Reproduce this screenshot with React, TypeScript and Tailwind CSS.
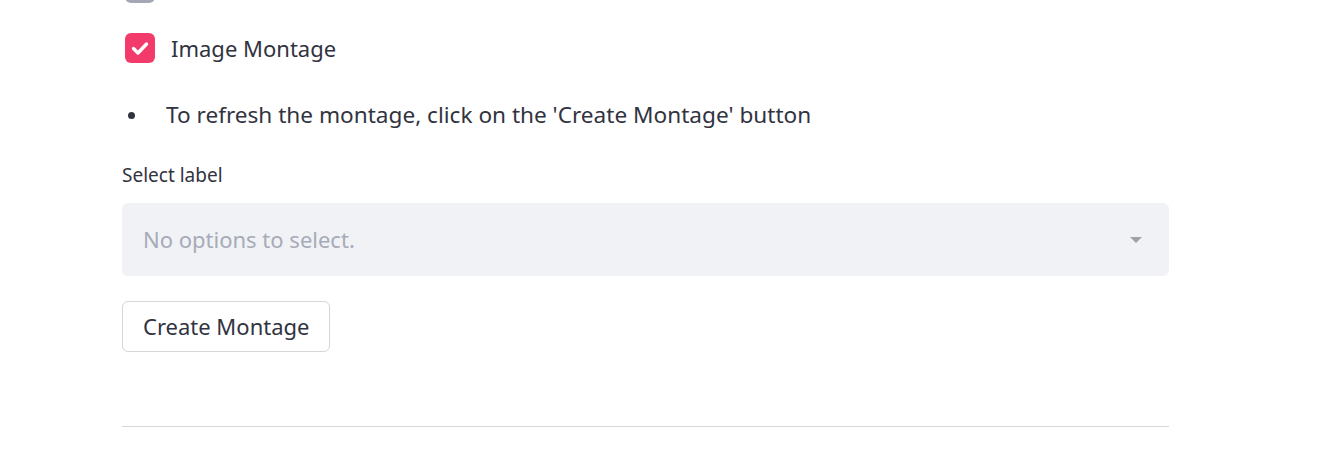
import React from "react";

export default function App() {
  const font = { fontFamily: '"Noto Sans", "Open Sans", sans-serif' };
  return (
    <div className="w-[1321px] h-[472px] bg-white overflow-hidden relative text-[#31333f]" style={font}>
      <div className="absolute left-[122px] top-[-28px] w-[1047px] flex flex-col">
        {/* cut-off checkbox row */}
        <div className="flex items-start h-[32px]">
          <div className="w-[30px] h-[30px] mt-[1px] ml-[3px] rounded-[6px] bg-[#a3a8b4]" />
          <span className="ml-[16px] text-[22px] leading-[24px]">Show the annotations on the key labels by entity</span>
        </div>
        {/* image montage checkbox */}
        <div className="flex items-center h-[32px] mt-[28px]">
          <div className="w-[30px] h-[30px] ml-[3px] rounded-[6px] bg-[#f23b6b] flex items-center justify-center">
            <svg width="20" height="20" viewBox="0 0 20 20" fill="none">
              <path d="M3.5 10.5l4.5 4.5 8.5-9" stroke="white" strokeWidth="3.4" strokeLinecap="round" strokeLinejoin="round" />
            </svg>
          </div>
          <span className="ml-[16px] text-[22px] leading-[32px]">Image Montage</span>
        </div>
        {/* bullet */}
        <div className="mt-[35px] flex items-center h-[32px]">
          <div className="w-[7px] h-[7px] rounded-full bg-[#31333f] ml-[6px]" />
          <span className="ml-[31px] text-[22.6px] leading-[32px]">To refresh the montage, click on the 'Create Montage' button</span>
        </div>
        {/* select */}
        <div className="mt-[32px] text-[19px] leading-[24px]">Select label</div>
        <div className="mt-[16px] h-[73px] rounded-[6px] bg-[#f0f2f6] flex items-center justify-between pl-[21px] pr-[26px]">
          <span className="text-[22px] text-[#a7abb8]">No options to select.</span>
          <svg width="14" height="8" viewBox="0 0 14 8">
            <path d="M1 1h12L7 7z" fill="#9ea0aa" />
          </svg>
        </div>
        {/* button */}
        <div className="mt-[25px]">
          <button className="h-[51px] px-[20px] rounded-[6px] border border-[#d5d6da] bg-white text-[22px] text-[#31333f]">
            Create Montage
          </button>
        </div>
        <div className="mt-[74px] h-px bg-[#d6d6d9]" />
      </div>
    </div>
  );
}
